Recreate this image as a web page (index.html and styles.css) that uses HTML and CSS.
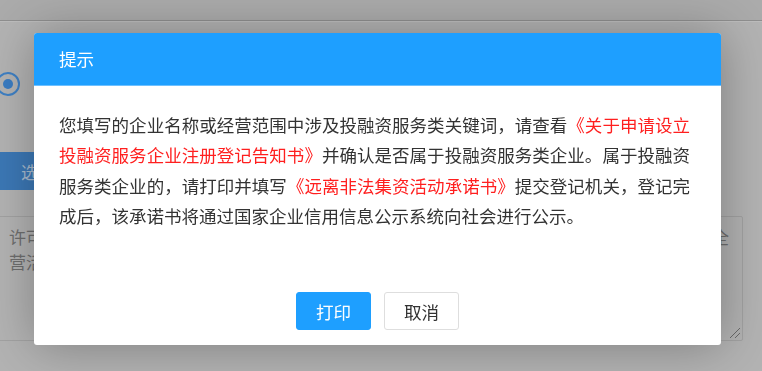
FILE: index.html
```html
<!DOCTYPE html>
<html lang="zh-CN">
<head>
<meta charset="utf-8">
<title>提示</title>
<link rel="stylesheet" href="styles.css">
</head>
<body>
<div class="page">
  <div class="topbar"></div>
  <div class="content">
    <div class="radio-row"><span class="radio"><span class="radio-dot"></span></span></div>
    <div class="tabbar"><span class="tab">选</span></div>
    <div class="textarea">
      <div class="ta-line"><span>许可经营项目</span><span>全</span></div>
      <div class="ta-line"><span>营活动</span></div>
      <svg class="grip" width="12" height="12" viewBox="0 0 12 12">
        <line x1="1" y1="11" x2="11" y2="1" stroke="#6a6a6a" stroke-width="1"/>
        <line x1="6" y1="11" x2="11" y2="6" stroke="#6a6a6a" stroke-width="1"/>
      </svg>
    </div>
  </div>
</div>

<div class="dialog" role="dialog">
  <div class="dialog-title">提示</div>
  <div class="dialog-body">
    <p class="notice">您填写的企业名称或经营范围中涉及投融资服务类关键词，请查看<span class="doc">《关于申请设立投融资服务企业注册登记告知书》</span>并确认是否属于投融资服务类企业。属于投融资服务类企业的，请打印并填写<span class="doc">《远离非法集资活动承诺书》</span>提交登记机关，登记完成后，该承诺书将通过国家企业信用信息公示系统向社会进行公示。</p>
  </div>
  <div class="dialog-footer">
    <button class="btn btn-primary" type="button">打印</button>
    <button class="btn btn-default" type="button">取消</button>
  </div>
</div>
</body>
</html>
```
FILE: styles.css
```css
html, body {
  margin: 0;
  padding: 0;
}
body {
  width: 762px;
  height: 371px;
  overflow: hidden;
  background: #b3b3b3;
  font-family: "Noto Sans CJK SC", "Noto Sans", sans-serif;
}
.page {
  height: 371px;
}
.topbar {
  height: 20px;
  background: #ababab;
  border-bottom: 1px solid #8f8f8f;
  box-shadow: 0 1px 0 #bdbdbd;
}
.content {
  display: flex;
  flex-direction: column;
}
.radio-row {
  margin-top: 51px;
  margin-left: -4px;
  height: 24px;
}
.radio {
  box-sizing: border-box;
  width: 24px;
  height: 24px;
  border: 2px solid #3f80c4;
  border-radius: 50%;
  display: flex;
  align-items: center;
  justify-content: center;
}
.radio-dot {
  width: 10px;
  height: 10px;
  border-radius: 50%;
  background: #3a7cc2;
}
.tabbar {
  margin-top: 56px;
  height: 38px;
  width: 120px;
  background: #3c78b6;
  display: flex;
  align-items: center;
}
.tab {
  padding-left: 21px;
  font-size: 17px;
  color: #a9bccf;
}
.textarea {
  position: relative;
  box-sizing: border-box;
  margin-top: 26px;
  margin-left: -10px;
  width: 753px;
  height: 125px;
  border: 1px solid #a2a2a2;
  border-radius: 2px;
  padding: 7px 13px 0 18px;
  font-size: 17px;
  line-height: 25px;
  color: #6e6e6e;
}
.ta-line {
  display: flex;
  justify-content: space-between;
}
.grip {
  position: absolute;
  right: 1px;
  bottom: 1px;
}

/* dialog */
.dialog {
  position: fixed;
  left: 34px;
  top: 33px;
  width: 687px;
  height: 312px;
  background: #fff;
  border-radius: 3px;
  box-shadow: 1px 1px 50px rgba(0, 0, 0, 0.3);
  display: flex;
  flex-direction: column;
  overflow: hidden;
}
.dialog-title {
  height: 52px;
  border-bottom: 1px solid #6ec0ff;
  background: #1e9fff;
  color: #fff;
  font-size: 17.6px;
  line-height: 52px;
  padding: 0 25px;
}
.dialog-body {
  padding: 24px 31px 0 25px;
}
.notice {
  margin: 0;
  font-size: 17.5px;
  line-height: 30.3px;
  color: #333;
  text-align: justify;
}
.doc {
  color: #ff1f1f;
}
.dialog-footer {
  margin-top: auto;
  padding-bottom: 15px;
  display: flex;
  justify-content: center;
  gap: 13px;
}
.btn {
  box-sizing: border-box;
  width: 75px;
  height: 38px;
  border-radius: 3px;
  font-family: "Noto Sans CJK SC", "Noto Sans", sans-serif;
  font-size: 17.6px;
  padding: 0;
  cursor: pointer;
}
.btn-primary {
  background: #1e9fff;
  border: 1px solid #1e9fff;
  color: #fff;
}
.btn-default {
  background: #fff;
  border: 1px solid #dedede;
  color: #333;
}
```
